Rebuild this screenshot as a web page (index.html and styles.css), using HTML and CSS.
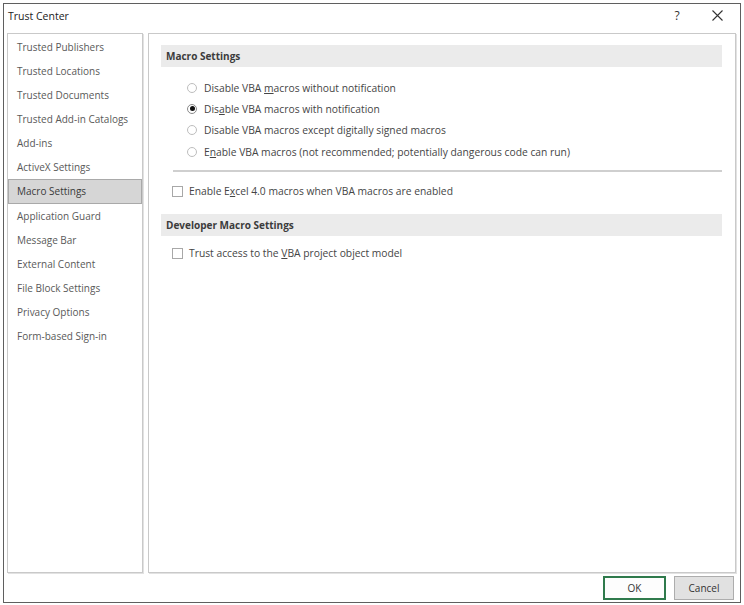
FILE: index.html
```html
<!DOCTYPE html>
<html>
<head>
<meta charset="utf-8">
<link rel="stylesheet" href="styles.css">
</head>
<body>
<div class="window">
  <div class="titlebar">
    <span class="title">Trust Center</span>
    <span class="help">?</span>
    <span class="close">
      <svg width="11" height="11" viewBox="0 0 11 11"><path d="M0.5 0.5 L10.5 10.5 M10.5 0.5 L0.5 10.5" stroke="#333" stroke-width="1.1" fill="none"/></svg>
    </span>
  </div>
  <div class="main">
    <ul class="nav">
      <li>Trusted Publishers</li>
      <li>Trusted Locations</li>
      <li>Trusted Documents</li>
      <li>Trusted Add-in Catalogs</li>
      <li>Add-ins</li>
      <li>ActiveX Settings</li>
      <li class="selected">Macro Settings</li>
      <li>Application Guard</li>
      <li>Message Bar</li>
      <li>External Content</li>
      <li>File Block Settings</li>
      <li>Privacy Options</li>
      <li>Form-based Sign-in</li>
    </ul>
    <div class="content">
      <div class="section-head">Macro Settings</div>
      <div class="radios">
        <div class="row"><span class="radio"></span><span>Disable VBA <u>m</u>acros without notification</span></div>
        <div class="row"><span class="radio checked"></span><span>Dis<u>a</u>ble VBA macros with notification</span></div>
        <div class="row"><span class="radio"></span><span>Disable VBA macros except digitally signed macros</span></div>
        <div class="row"><span class="radio"></span><span>E<u>n</u>able VBA macros (not recommended; potentially dangerous code can run)</span></div>
      </div>
      <div class="separator"></div>
      <div class="check-row"><span class="checkbox"></span><span>Enable E<u>x</u>cel 4.0 macros when VBA macros are enabled</span></div>
      <div class="section-head dev">Developer Macro Settings</div>
      <div class="check-row trust"><span class="checkbox"></span><span>Trust access to the <u>V</u>BA project object model</span></div>
    </div>
  </div>
  <div class="footer">
    <button class="btn ok">OK</button>
    <button class="btn cancel">Cancel</button>
  </div>
</div>
</body>
</html>
```

FILE: styles.css
```css
* { box-sizing: border-box; }
html, body { margin: 0; padding: 0; background: #ffffff; }
body {
  font-family: "Open Sans", "Noto Sans", "Liberation Sans", sans-serif;
  font-size: 10px;
  color: #454545;
}
.window {
  margin: 3px;
  width: 738px;
  height: 600px;
  border: 1px solid #5f5f5f;
  display: flex;
  flex-direction: column;
  background: #fff;
}
.titlebar {
  height: 29px;
  display: flex;
  align-items: center;
  padding-left: 4px;
  padding-bottom: 6px;
  color: #222;
  font-size: 10.5px;
}
.title { flex: 1; }
.help {
  width: 20px;
  text-align: center;
  font-size: 12px;
  margin-right: 25px;
  color: #333;
}
.close {
  width: 11px;
  height: 11px;
  display: flex;
  margin-right: 17px;
}
.main {
  flex: 1;
  display: flex;
  gap: 5px;
  padding: 0 4px 0 3px;
  min-height: 0;
}
.nav {
  list-style: none;
  margin: 0;
  padding: 1px 0 0 0;
  width: 136px;
  border: 1px solid #c9c9c9;
  box-shadow: 1px 1px 0 #e2e2e2;
  color: #595959;
}
.nav li {
  height: 24.08px;
  line-height: 23px;
  padding-left: 8px;
  white-space: nowrap;
  border: 1px solid transparent;
}
.nav li.selected {
  background: #d6d6d6;
  border-color: #a9a9a9;
  color: #3a3a3a;
}
.content {
  flex: 1;
  border: 1px solid #c9c9c9;
  box-shadow: 1px 1px 0 #e2e2e2;
  padding: 11px 13px 0 12px;
  font-size: 10.3px;
}
.section-head {
  height: 22px;
  line-height: 22px;
  background: #ebebeb;
  padding-left: 5px;
  font-weight: 700;
  font-size: 10px;
  color: #3c3c3c;
}
.radios {
  margin-top: 10px;
  padding-left: 26px;
}
.row {
  height: 21.3px;
  display: flex;
  align-items: center;
  gap: 7px;
}
.radio {
  width: 10px;
  height: 10px;
  border-radius: 50%;
  border: 1px solid #bdbdbd;
  display: flex;
  align-items: center;
  justify-content: center;
  flex: none;
}
.radio.checked { border-color: #8a8a8a; }
.radio.checked::after {
  content: "";
  width: 5px;
  height: 5px;
  border-radius: 50%;
  background: #111;
}
.separator {
  margin: 8px 0 0 12px;
  height: 2px;
  background: #cfcfcf;
}
.check-row {
  display: flex;
  align-items: center;
  gap: 6px;
  height: 22px;
  margin-top: 8px;
  padding-left: 11px;
  margin-bottom: 12px;
}
.check-row.trust { margin-top: 6px; }
.checkbox {
  width: 11px;
  height: 11px;
  border: 1px solid #a8a8a8;
  flex: none;
  background: #fff;
}
.footer {
  height: 29px;
  display: flex;
  justify-content: flex-end;
  align-items: flex-start;
  padding: 3px 6px 0 0;
  gap: 8px;
}
.btn {
  font-family: inherit;
  font-size: 10px;
  color: #333;
  height: 24px;
  margin: 0;
  padding: 0;
  cursor: default;
}
.ok {
  width: 63px;
  background: #fdfdfd;
  border: 2px solid #2f7a4c;
}
.cancel {
  width: 60px;
  background: #e1e1e1;
  border: 1px solid #adadad;
}
```
